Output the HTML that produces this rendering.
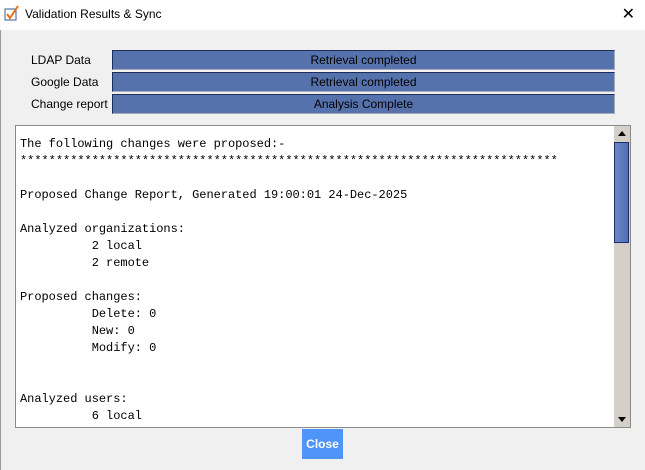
<!DOCTYPE html><html><head><style>
body{margin:0;width:645px;height:470px;background:#f0f0f0;position:relative;overflow:hidden;font-family:"Liberation Sans",sans-serif;}
.tb{position:absolute;left:0;top:0;width:645px;height:30px;background:#fff;}
.tb .t{position:absolute;left:25px;top:7px;font-size:12px;color:#000;}
.x{position:absolute;right:10px;top:4px;font-size:16px;}
.lb{position:absolute;left:0;top:30px;width:1px;height:440px;background:#999;}
.lab{position:absolute;left:31px;font-size:12px;}
.bar{position:absolute;left:112px;width:501px;height:18px;background:#5572ac;border:1px solid #1c2e5a;border-right-color:#aab;border-bottom-color:#aab;font-size:12px;text-align:center;line-height:18px;color:#000;}
.ta{position:absolute;left:15px;top:125px;width:614px;height:301px;background:#fff;border:1px solid #8a8a8a;}
pre{margin:0;position:absolute;left:4px;top:10px;font-family:"Liberation Mono",monospace;font-size:12px;line-height:17px;letter-spacing:-0.03px;color:#000;}
.sb{position:absolute;left:598px;top:0;width:16px;height:301px;background:#d4d0c8;}
.th{position:absolute;left:0;top:16px;width:13px;height:99px;background:linear-gradient(90deg,#6a88c8,#5070b0);border:1px solid #1a2e6e;}
.btn{position:absolute;left:302px;top:429px;width:41px;height:30px;background:#4f94f8;color:#fff;font-size:12px;font-weight:bold;text-align:center;line-height:30px;}
</style></head><body>
<div class="tb"><svg style="position:absolute;left:4px;top:5px" width="16" height="16"><rect x="1" y="4" width="11" height="11" fill="none" stroke="#3a5a9a"/><path d="M3 9l3 4 8-12" stroke="#e8701a" stroke-width="2" fill="none"/></svg><span class="t">Validation Results &amp; Sync</span><span class="x">✕</span></div>
<div class="lb"></div>
<div class="lab" style="top:53px">LDAP Data</div>
<div class="lab" style="top:75px">Google Data</div>
<div class="lab" style="top:97px">Change report</div>
<div class="bar" style="top:50px">Retrieval completed</div>
<div class="bar" style="top:72px">Retrieval completed</div>
<div class="bar" style="top:94px">Analysis Complete</div>
<div class="ta"><pre>The following changes were proposed:-
***************************************************************************

Proposed Change Report, Generated 19:00:01 24-Dec-2025

Analyzed organizations:
          2 local
          2 remote

Proposed changes:
          Delete: 0
          New: 0
          Modify: 0


Analyzed users:
          6 local</pre>
<div class="sb"><div style="position:absolute;left:4px;top:5px;border:4px solid transparent;border-bottom:5px solid #000;border-top:0"></div><div class="th"></div><div style="position:absolute;left:4px;top:291px;border:4px solid transparent;border-top:5px solid #000;border-bottom:0"></div></div></div>
<div class="btn">Close</div>
</body></html>
